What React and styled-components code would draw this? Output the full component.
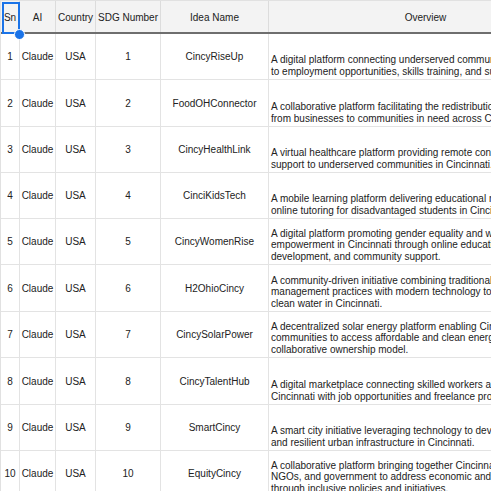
import styled, { createGlobalStyle } from "styled-components";

const GlobalStyle = createGlobalStyle`
  html, body {
    margin: 0;
    padding: 0;
    background: #ffffff;
    overflow: hidden;
  }
  body {
    font-family: "Liberation Sans", Arial, sans-serif;
    font-size: 10px;
    color: #222222;
  }
`;

const COLS = "19px 36px 40px 65px 108px 314px";

const rows = [
  { ai: "Claude", country: "USA", idea: "CincyRiseUp", h: 46, overview: [
    "A digital platform connecting underserved communities in Cincinnati",
    "to employment opportunities, skills training, and support services.",
  ] },
  { ai: "Claude", country: "USA", idea: "FoodOHConnector", h: 47, overview: [
    "A collaborative platform facilitating the redistribution of surplus food",
    "from businesses to communities in need across Cincinnati.",
  ] },
  { ai: "Claude", country: "USA", idea: "CincyHealthLink", h: 46, overview: [
    "A virtual healthcare platform providing remote consultations and health",
    "support to underserved communities in Cincinnati.",
  ] },
  { ai: "Claude", country: "USA", idea: "CinciKidsTech", h: 46, overview: [
    "A mobile learning platform delivering educational resources and",
    "online tutoring for disadvantaged students in Cincinnati.",
  ] },
  { ai: "Claude", country: "USA", idea: "CincyWomenRise", h: 46, overview: [
    "A digital platform promoting gender equality and women's",
    "empowerment in Cincinnati through online education, skills",
    "development, and community support.",
  ] },
  { ai: "Claude", country: "USA", idea: "H2OhioCincy", h: 47, overview: [
    "A community-driven initiative combining traditional water",
    "management practices with modern technology to ensure access to",
    "clean water in Cincinnati.",
  ] },
  { ai: "Claude", country: "USA", idea: "CincySolarPower", h: 46, overview: [
    "A decentralized solar energy platform enabling Cincinnati",
    "communities to access affordable and clean energy through a",
    "collaborative ownership model.",
  ] },
  { ai: "Claude", country: "USA", idea: "CincyTalentHub", h: 47, overview: [
    "A digital marketplace connecting skilled workers and freelancers in",
    "Cincinnati with job opportunities and freelance projects.",
  ] },
  { ai: "Claude", country: "USA", idea: "SmartCincy", h: 46, overview: [
    "A smart city initiative leveraging technology to develop sustainable",
    "and resilient urban infrastructure in Cincinnati.",
  ] },
  { ai: "Claude", country: "USA", idea: "EquityCincy", h: 46, overview: [
    "A collaborative platform bringing together Cincinnati's businesses,",
    "NGOs, and government to address economic and social inequalities",
    "through inclusive policies and initiatives.",
  ] },
];

const Sheet = styled.div`
  position: relative;
  width: 583px;
  border-left: 1px solid #e1e1e1;
  border-top: 1px solid #e1e1e1;
`;

const HeaderRow = styled.div`
  display: grid;
  grid-template-columns: ${COLS};
  height: 33px;
  background: #f3f3f3;
  border-bottom: 2px solid #6e6e6e;
  box-sizing: border-box;
`;

const HeadCell = styled.div`
  display: flex;
  align-items: center;
  justify-content: center;
  border-right: 1px solid #dcdcdc;
  white-space: nowrap;
  overflow: hidden;
  color: #222222;
  padding-top: 1px;
`;

const Row = styled.div`
  display: grid;
  grid-template-columns: ${COLS};
  height: ${(p) => p.$h}px;
  border-bottom: 1px solid #e3e3e3;
  box-sizing: border-box;
`;

const Cell = styled.div`
  display: flex;
  align-items: center;
  justify-content: center;
  border-right: 1px solid #e3e3e3;
  white-space: nowrap;
  overflow: hidden;
`;

const TextCell = styled.div`
  display: flex;
  align-items: flex-end;
  padding: 0 0 2px 2px;
  border-right: 1px solid #e3e3e3;
  white-space: pre;
  line-height: 11.5px;
  overflow: hidden;
`;

const Selection = styled.div`
  position: absolute;
  left: 1px;
  top: 1px;
  width: 18px;
  height: 32px;
  border: 2px solid #1a73e8;
  box-sizing: border-box;
  pointer-events: none;
`;

const Handle = styled.div`
  position: absolute;
  left: 13px;
  top: 28px;
  width: 9px;
  height: 9px;
  border-radius: 50%;
  background: #1a73e8;
  border: 1px solid #ffffff;
`;

export default function App() {
  return (
    <>
      <GlobalStyle />
      <Sheet>
        <HeaderRow>
          <HeadCell>Sn</HeadCell>
          <HeadCell>AI</HeadCell>
          <HeadCell>Country</HeadCell>
          <HeadCell>SDG Number</HeadCell>
          <HeadCell>Idea Name</HeadCell>
          <HeadCell>Overview</HeadCell>
        </HeaderRow>
        {rows.map((r, i) => (
          <Row key={i} $h={r.h}>
            <Cell>{i + 1}</Cell>
            <Cell>{r.ai}</Cell>
            <Cell>{r.country}</Cell>
            <Cell>{i + 1}</Cell>
            <Cell>{r.idea}</Cell>
            <TextCell>{r.overview.join("\n")}</TextCell>
          </Row>
        ))}
        <Selection />
        <Handle />
      </Sheet>
    </>
  );
}
